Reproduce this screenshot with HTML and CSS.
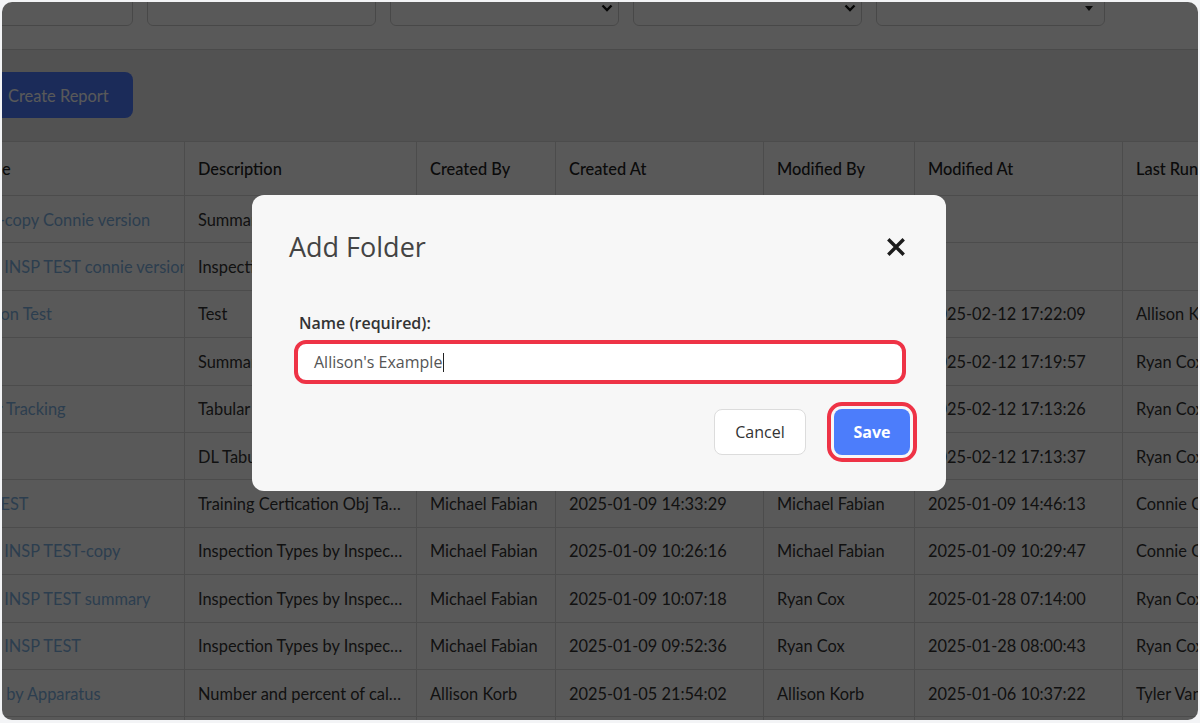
FILE: index.html
```html
<!DOCTYPE html>
<html lang="en">
<head>
<meta charset="utf-8">
<title>Reports</title>
<link rel="stylesheet" href="styles.css">
</head>
<body>
<div class="window">
  <div class="filters">
    <div class="field field-first"></div>
    <div class="field"></div>
    <div class="field">
      <svg class="chev" width="12" height="8" viewBox="0 0 12 8"><path d="M1.5 1.5 L6 6 L10.5 1.5" fill="none" stroke="#111" stroke-width="2.4"/></svg>
    </div>
    <div class="field">
      <svg class="chev" width="12" height="8" viewBox="0 0 12 8"><path d="M1.5 1.5 L6 6 L10.5 1.5" fill="none" stroke="#111" stroke-width="2.4"/></svg>
    </div>
    <div class="field field-caret">
      <svg width="8" height="5" viewBox="0 0 8 5"><path d="M0 0 H8 L4 5 Z" fill="#222"/></svg>
    </div>
  </div>

  <main class="content">
    <div class="toolbar">
      <button class="btn-create" type="button">Create Report</button>
    </div>
    <div class="table-wrap">
      <table class="reports">
        <colgroup>
          <col class="c-name"><col class="c-desc"><col class="c-by"><col class="c-at"><col class="c-mby"><col class="c-mat"><col class="c-run">
        </colgroup>
        <thead>
          <tr>
            <th>Name</th><th>Description</th><th>Created By</th><th>Created At</th><th>Modified By</th><th>Modified At</th><th>Last Run By</th>
          </tr>
        </thead>
        <tbody>
          <tr><td><a href="#">Unit-copy Connie version</a></td><td class="desc">Summary of unit responses</td><td>Connie Gray</td><td>2025-02-13 09:12:44</td><td></td><td></td><td></td></tr>
          <tr><td><a href="#">Bldg INSP TEST connie version</a></td><td class="desc">Inspection Types by Inspector</td><td>Connie Gray</td><td>2025-02-13 09:02:10</td><td></td><td></td><td></td></tr>
          <tr><td><a href="#">Station Test</a></td><td class="desc">Test</td><td>Allison Korb</td><td>2025-02-12 17:20:31</td><td>Allison Korb</td><td>2025-02-12 17:22:09</td><td>Allison Korb</td></tr>
          <tr><td><a href="#">Calls</a></td><td class="desc">Summary of calls by type</td><td>Ryan Cox</td><td>2025-02-12 17:18:02</td><td>Ryan Cox</td><td>2025-02-12 17:19:57</td><td>Ryan Cox</td></tr>
          <tr><td><a href="#">Gear Tracking</a></td><td class="desc">Tabular gear tracking list</td><td>Ryan Cox</td><td>2025-02-12 17:11:40</td><td>Ryan Cox</td><td>2025-02-12 17:13:26</td><td>Ryan Cox</td></tr>
          <tr><td><a href="#">Logs</a></td><td class="desc">DL Tabular log</td><td>Ryan Cox</td><td>2025-02-12 17:12:05</td><td>Ryan Cox</td><td>2025-02-12 17:13:37</td><td>Ryan Cox</td></tr>
          <tr><td><a href="#">Fit TEST</a></td><td class="desc">Training Certication Obj Tasks by Member</td><td>Michael Fabian</td><td>2025-01-09 14:33:29</td><td>Michael Fabian</td><td>2025-01-09 14:46:13</td><td>Connie Gray</td></tr>
          <tr><td><a href="#">Bldg INSP TEST-copy</a></td><td class="desc">Inspection Types by Inspector</td><td>Michael Fabian</td><td>2025-01-09 10:26:16</td><td>Michael Fabian</td><td>2025-01-09 10:29:47</td><td>Connie Gray</td></tr>
          <tr><td><a href="#">Bldg INSP TEST summary</a></td><td class="desc">Inspection Types by Inspector</td><td>Michael Fabian</td><td>2025-01-09 10:07:18</td><td>Ryan Cox</td><td>2025-01-28 07:14:00</td><td>Ryan Cox</td></tr>
          <tr><td><a href="#">Bldg INSP TEST</a></td><td class="desc">Inspection Types by Inspector</td><td>Michael Fabian</td><td>2025-01-09 09:52:36</td><td>Ryan Cox</td><td>2025-01-28 08:00:43</td><td>Ryan Cox</td></tr>
          <tr><td><a href="#">Trips by Apparatus</a></td><td class="desc">Number and percent of calls by apparatus</td><td>Allison Korb</td><td>2025-01-05 21:54:02</td><td>Allison Korb</td><td>2025-01-06 10:37:22</td><td>Tyler Vance</td></tr>
          <tr><td><a href="#">Response Times</a></td><td class="desc">Average response times</td><td>Allison Korb</td><td>2025-01-04 11:20:09</td><td>Allison Korb</td><td>2025-01-04 11:31:50</td><td>Tyler Vance</td></tr>
        </tbody>
      </table>
    </div>
  </main>

  <div class="overlay"></div>

  <div class="modal" role="dialog" aria-labelledby="folder-title">
    <div class="modal-header">
      <h2 id="folder-title" class="modal-title">Add Folder</h2>
      <button class="modal-close" type="button" aria-label="Close">
        <svg width="18" height="18" viewBox="0 0 18 18"><path d="M2.5 2.5 L15.5 15.5 M15.5 2.5 L2.5 15.5" stroke="#1c1c1c" stroke-width="3.4" stroke-linecap="square" fill="none"/></svg>
      </button>
    </div>
    <div class="modal-body">
      <label class="field-label">Name (required):</label>
      <div class="text-input">Allison's Example<span class="caret"></span></div>
    </div>
    <div class="modal-footer">
      <button class="btn-cancel" type="button">Cancel</button>
      <button class="btn-save" type="button">Save</button>
    </div>
  </div>
</div>
</body>
</html>
```

FILE: styles.css
```css
* { box-sizing: border-box; }

html, body { height: 100%; }

body {
  margin: 0;
  padding: 2px 2px 3px 2px;
  background: #f3f4f6;
  font-family: Lato, "Noto Sans", sans-serif;
  color: #333;
}

.window {
  position: relative;
  height: 718px;
  border-radius: 10px;
  overflow: hidden;
  background: #ececec;
}

/* filter bar */
.filters {
  height: 48px;
  background: #fff;
  border-bottom: 1px solid #d4d4d4;
  display: flex;
  gap: 14px;
  align-items: flex-start;
}

.field {
  flex: none;
  width: 229px;
  height: 36px;
  margin-top: -12px;
  border: 1px solid #cfcfcf;
  border-radius: 6px;
  background: #fff;
  display: flex;
  align-items: center;
  justify-content: flex-end;
  padding-right: 5px;
}

.field-first {
  width: 150px;
  margin-left: -19px;
}

.field-caret { padding-right: 11px; }

/* page content */
.content {
  overflow: hidden;
}

.toolbar {
  padding-top: 22px;
}

.btn-create {
  margin-left: -18px;
  height: 46px;
  padding: 0 24px;
  border: none;
  border-radius: 8px;
  background: #4d7bff;
  color: #fff;
  font-family: Lato, sans-serif;
  font-size: 16.4px;
}

.table-wrap {
  margin-top: 23px;
  margin-left: -48px;
}

.reports {
  width: 1328px;
  table-layout: fixed;
  border-collapse: collapse;
  background: #fff;
  font-size: 16.4px;
}

.c-name { width: 230px; }
.c-desc { width: 232px; }
.c-by { width: 139px; }
.c-at { width: 208px; }
.c-mby { width: 151px; }
.c-mat { width: 208px; }
.c-run { width: 160px; }

.reports th,
.reports td {
  border: 1px solid #dadada;
  padding: 0 13px;
  white-space: nowrap;
  overflow: hidden;
  text-align: left;
}

.reports th {
  height: 54px;
  font-weight: 500;
  color: #222;
}

.reports td {
  height: 47.4px;
  color: #333;
}

.reports td.desc { text-overflow: ellipsis; }

.reports a {
  color: #7fb2e2;
  text-decoration: none;
}

/* modal */
.overlay {
  position: absolute;
  inset: 0;
  background: rgba(0, 0, 0, 0.65);
}

.modal {
  position: absolute;
  left: 250px;
  top: 193px;
  width: 694px;
  background: #f7f7f7;
  border-radius: 12px;
  font-family: "Open Sans", "Noto Sans", sans-serif;
  padding-bottom: 36px;
}

.modal-header {
  display: flex;
  align-items: center;
  justify-content: space-between;
  padding: 35px 41px 0 37px;
}

.modal-title {
  margin: 0;
  font-size: 27px;
  line-height: 34px;
  font-weight: 400;
  color: #444;
}

.modal-close {
  border: none;
  background: none;
  padding: 0;
  width: 18px;
  height: 18px;
  display: flex;
}

.modal-body {
  padding: 49px 44px 0 46px;
}

.field-label {
  display: block;
  font-size: 16px;
  line-height: 20px;
  font-weight: 600;
  color: #333;
  margin: 0 0 11px 1px;
}

.text-input {
  height: 36px;
  background: #fff;
  border-radius: 8px;
  outline: 4px solid #ee3346;
  display: flex;
  align-items: center;
  padding: 0 16px;
  font-size: 16px;
  color: #555;
}

.caret {
  display: inline-block;
  width: 1px;
  height: 19px;
  background: #222;
  margin-left: 1px;
}

.modal-footer {
  display: flex;
  justify-content: flex-end;
  gap: 28px;
  padding: 29px 36px 0 0;
}

.btn-cancel,
.btn-save {
  height: 46px;
  border-radius: 8px;
  font-family: "Open Sans", sans-serif;
  font-size: 16px;
}

.btn-cancel {
  width: 92px;
  background: #fff;
  border: 1px solid #dcdcdc;
  color: #333;
}

.btn-save {
  width: 76px;
  background: #4c7dfb;
  border: none;
  color: #fff;
  font-weight: 700;
  outline: 4px solid #ee3346;
  outline-offset: 3px;
}
```
